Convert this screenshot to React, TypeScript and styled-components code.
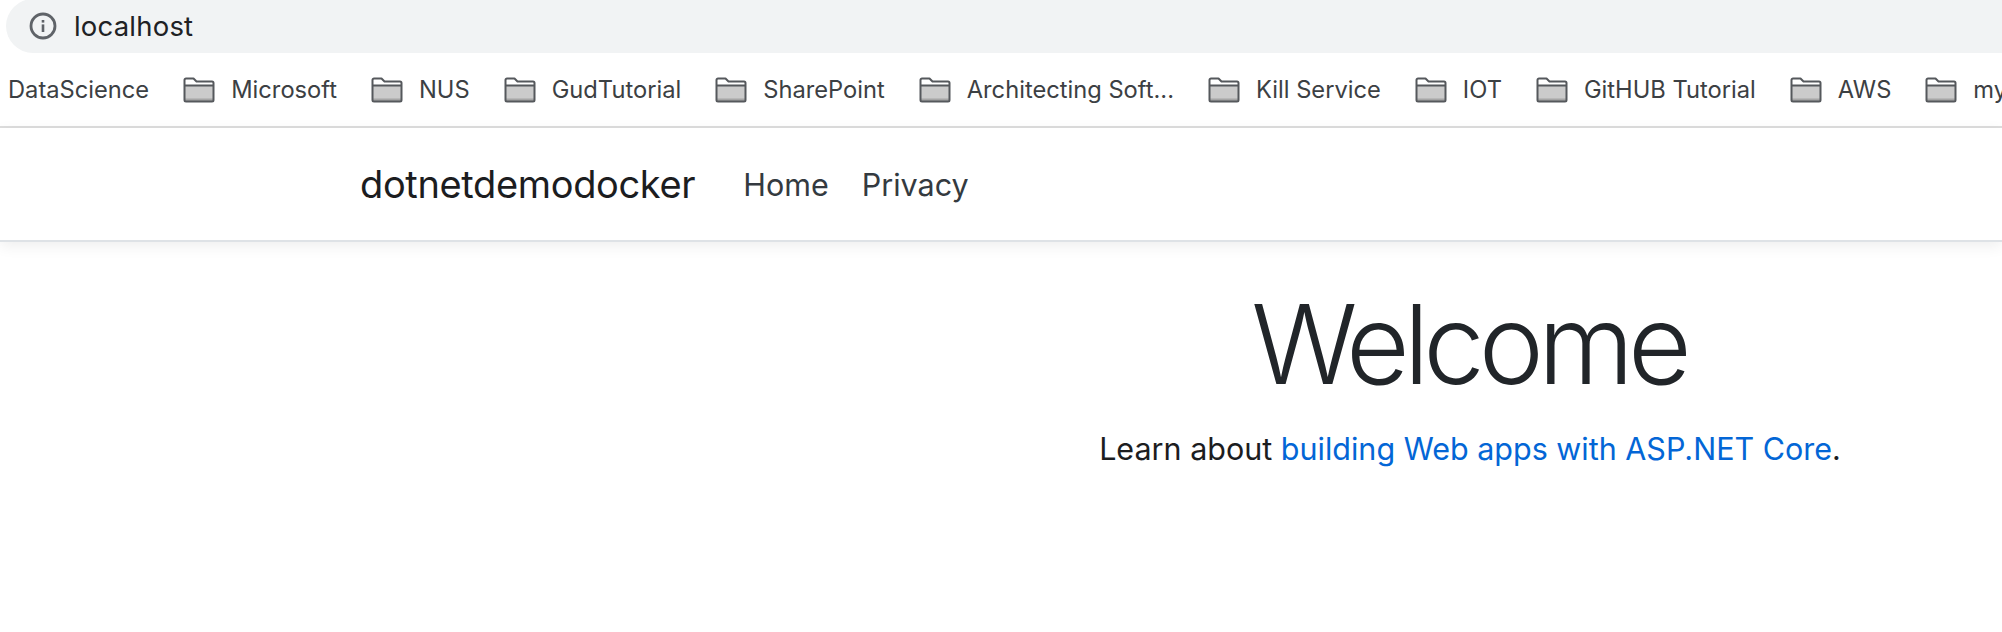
import React from "react";
import styled, { createGlobalStyle } from "styled-components";

const Global = createGlobalStyle`
  html, body { margin: 0; padding: 0; background: #fff; }
  body { font-family: Inter, "Liberation Sans", sans-serif; }
`;

const Page = styled.div`
  width: 2002px;
  height: 632px;
  overflow: hidden;
  background: #fff;
  display: flex;
  flex-direction: column;
`;

const AddressRow = styled.div`
  height: 54px;
  padding-left: 6px;
  flex: none;
`;

const AddressBar = styled.div`
  height: 100%;
  width: 2100px;
  margin-top: -1px;
  box-sizing: border-box;
  background: #f1f3f4;
  border-radius: 27px;
  display: flex;
  align-items: center;
  padding-left: 23px;
  gap: 17px;
`;

const UrlText = styled.span`
  font-size: 27.5px;
  letter-spacing: 0.2px;
  color: #202124;
`;

const BookmarkBar = styled.div`
  height: 74px;
  flex: none;
  display: flex;
  align-items: center;
  gap: 34px;
  padding-left: 8px;
  box-sizing: border-box;
  border-bottom: 2px solid #dddddd;
  white-space: nowrap;
  overflow: hidden;
`;

const Bookmark = styled.div`
  display: flex;
  align-items: center;
  gap: 16px;
  flex: none;
`;

const BookmarkLabel = styled.span`
  font-size: 23.7px;
  padding-bottom: 2px;
  color: #3c4043;
`;

const Navbar = styled.nav`
  height: 114px;
  flex: none;
  box-sizing: border-box;
  padding-left: 360px;
  border-bottom: 2px solid #dee2e6;
  box-shadow: 0 4px 14px rgba(0, 0, 0, 0.07);
  display: flex;
  align-items: center;
  position: relative;
`;

const Brand = styled.a`
  font-size: 38px;
  letter-spacing: -0.35px;
  color: #1c1d1f;
  margin-right: 48px;
`;

const NavLink = styled.a`
  font-size: 30.5px;
  color: #343a40;
  margin-right: 33px;
`;

const Main = styled.main`
  width: 2250px;
  margin-left: 345px;
  text-align: center;
  flex: none;
`;

const Title = styled.h1`
  margin: 35px 0 0;
  padding-right: 3px;
  font-size: 110px;
  line-height: 134px;
  font-weight: 300;
  letter-spacing: -6px;
  color: #212529;
`;

const Lead = styled.p`
  margin: 14px 0 0;
  font-size: 30.5px;
  line-height: 48px;
  color: #1c1d1f;
`;

const Link = styled.a`
  color: #0366d6;
`;

const InfoIcon = () => (
  <svg width="28" height="28" viewBox="0 0 28 28" fill="none">
    <circle cx="14" cy="14" r="12" stroke="#5f6368" strokeWidth="2.8" />
    <rect x="12.7" y="12.4" width="2.6" height="7.6" fill="#5f6368" />
    <rect x="12.7" y="8" width="2.6" height="2.6" fill="#5f6368" />
  </svg>
);

const FolderIcon = () => (
  <svg width="32" height="26" viewBox="0 0 32 26" fill="none">
    <path d="M1.5 8.5H30.5V23a1.5 1.5 0 0 1-1.5 1.5H3A1.5 1.5 0 0 1 1.5 23Z" fill="#cbcbcb" />
    <rect x="2" y="21.5" width="28" height="2.5" fill="#a6a6a6" />
    <path
      d="M1.5 8.5V3A1.5 1.5 0 0 1 3 1.5H10.5L13.5 4.5H29A1.5 1.5 0 0 1 30.5 6V23A1.5 1.5 0 0 1 29 24.5H3A1.5 1.5 0 0 1 1.5 23V8.5H30.5"
      stroke="#55585c"
      strokeWidth="2"
      strokeLinejoin="round"
    />
  </svg>
);

const folders = [
  "Microsoft",
  "NUS",
  "GudTutorial",
  "SharePoint",
  "Architecting Soft...",
  "Kill Service",
  "IOT",
  "GitHUB Tutorial",
  "AWS",
  "my",
];

export default function App() {
  return (
    <Page>
      <Global />
      <AddressRow>
        <AddressBar>
          <InfoIcon />
          <UrlText>localhost</UrlText>
        </AddressBar>
      </AddressRow>
      <BookmarkBar>
        <Bookmark>
          <BookmarkLabel>DataScience</BookmarkLabel>
        </Bookmark>
        {folders.map((name) => (
          <Bookmark key={name}>
            <FolderIcon />
            <BookmarkLabel>{name}</BookmarkLabel>
          </Bookmark>
        ))}
      </BookmarkBar>
      <Navbar>
        <Brand>dotnetdemodocker</Brand>
        <NavLink>Home</NavLink>
        <NavLink>Privacy</NavLink>
      </Navbar>
      <Main>
        <Title>Welcome</Title>
        <Lead>
          Learn about <Link>building Web apps with ASP.NET Core</Link>.
        </Lead>
      </Main>
    </Page>
  );
}
